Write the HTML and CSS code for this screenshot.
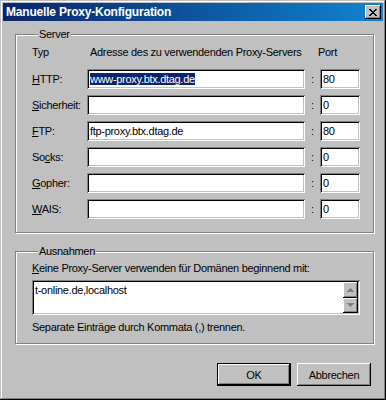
FILE: index.html
```html
<!DOCTYPE html>
<html>
<head>
    <title>Manuelle Proxy-Konfiguration</title>
    <link rel="stylesheet" href="styles.css">
</head>
<body>
    <div class="window">
        <div class="titlebar">
            <span class="title">Manuelle Proxy-Konfiguration</span>
            <div class="close-btn">
                <svg width="8" height="7" viewBox="0 0 8 7">
                    <path d="M0 0h2v1h1v1h2v-1h1v-1h2v1h-1v1h-1v1h-1v1h1v1h1v1h1v1h-2v-1h-1v-1h-2v1h-1v1h-2v-1h1v-1h1v-1h1v-1h-1v-1h-1v-1h-1z" fill="#000"/>
                </svg>
            </div>
        </div>

        <div class="content">
            <fieldset class="group server">
                <legend>Server</legend>
                <div class="proxy-grid">
                    <span class="head">Typ</span>
                    <span class="head addr">Adresse des zu verwendenden Proxy-Servers</span>
                    <span></span>
                    <span class="head port-head">Port</span>

                    <span class="label"><u>H</u>TTP:</span>
                    <div class="field"><span class="selected">www-proxy.btx.dtag.de</span></div>
                    <span class="colon">:</span>
                    <div class="field">80</div>

                    <span class="label"><u>S</u>icherheit:</span>
                    <div class="field"></div>
                    <span class="colon">:</span>
                    <div class="field">0</div>

                    <span class="label"><u>F</u>TP:</span>
                    <div class="field">ftp-proxy.btx.dtag.de</div>
                    <span class="colon">:</span>
                    <div class="field">80</div>

                    <span class="label">So<u>c</u>ks:</span>
                    <div class="field"></div>
                    <span class="colon">:</span>
                    <div class="field">0</div>

                    <span class="label"><u>G</u>opher:</span>
                    <div class="field"></div>
                    <span class="colon">:</span>
                    <div class="field">0</div>

                    <span class="label"><u>W</u>AIS:</span>
                    <div class="field"></div>
                    <span class="colon">:</span>
                    <div class="field">0</div>
                </div>
            </fieldset>

            <fieldset class="group exceptions">
                <legend>Ausnahmen</legend>
                <p class="hint"><u>K</u>eine Proxy-Server verwenden für Domänen beginnend mit:</p>
                <div class="field textarea">
                    <span class="text">t-online.de,localhost</span>
                    <div class="scrollbar">
                        <div class="scroll-btn">
                            <svg width="7" height="4" viewBox="0 0 7 4"><path d="M3 0h1v1h1v1h1v1h1v1h-7v-1h1v-1h1v-1h1z" fill="#808080"/></svg>
                        </div>
                        <div class="scroll-btn">
                            <svg width="7" height="4" viewBox="0 0 7 4"><path d="M0 0h7v1h-1v1h-1v1h-1v1h-1v-1h-1v-1h-1v-1h-1z" fill="#808080"/></svg>
                        </div>
                    </div>
                </div>
                <p class="note">Separate Einträge durch Kommata (,) trennen.</p>
            </fieldset>

            <div class="buttons">
                <div class="button default">OK</div>
                <div class="button">Abbrechen</div>
            </div>
        </div>
    </div>
</body>
</html>
```

FILE: styles.css
```css
* {
    margin: 0;
    padding: 0;
    box-sizing: border-box;
}

body {
    font-family: "Liberation Sans", Arial, sans-serif;
    font-size: 11px;
    letter-spacing: -0.3px;
    color: #000;
    background: #c0c0c0;
}

.window {
    width: 386px;
    height: 400px;
    padding: 3px;
    background: #c0c0c0;
    box-shadow: inset -1px -1px #000, inset 1px 1px #c0c0c0,
                inset -2px -2px #808080, inset 2px 2px #fff;
}

/* Title bar */
.titlebar {
    height: 18px;
    display: flex;
    align-items: center;
    justify-content: space-between;
    padding: 0 2px 0 3px;
    background: linear-gradient(to right, #0a246a, #1084d0);
}

.title {
    color: #fff;
    font-weight: bold;
    font-size: 12px;
    letter-spacing: -0.2px;
}

.close-btn {
    width: 16px;
    height: 14px;
    display: flex;
    align-items: center;
    justify-content: center;
    background: #c0c0c0;
    box-shadow: inset -1px -1px #000, inset 1px 1px #fff,
                inset -2px -2px #808080;
}

.content {
    padding: 7px 9px 0 12px;
}

/* Group boxes */
.group {
    border: 1px solid #808080;
    box-shadow: inset 1px 1px #fff, 1px 1px #fff;
}

.group legend {
    margin-left: 6px;
    padding: 0 1px;
    line-height: 13px;
    background: #c0c0c0;
}

.server {
    height: 205px;
    padding: 5px 0 0 16px;
}

.proxy-grid {
    display: grid;
    grid-template-columns: 55px 218px 15px 40px;
    grid-template-rows: 17px repeat(6, 20px);
    row-gap: 6px;
}

.head {
    line-height: 13px;
    white-space: nowrap;
}

.addr {
    padding-left: 3px;
}

.port-head {
    margin-left: -2px;
}

.label {
    line-height: 20px;
}

.colon {
    line-height: 20px;
    text-align: center;
}

.field {
    height: 20px;
    padding: 3px 0 0 3px;
    line-height: 14px;
    background: #fff;
    white-space: nowrap;
    box-shadow: inset 1px 1px #808080, inset -1px -1px #fff,
                inset 2px 2px #000, inset -2px -2px #c0c0c0;
}

.selected {
    background: #0a246a;
    color: #fff;
}

.exceptions {
    margin-top: 12px;
    height: 99px;
    padding: 3px 0 0 16px;
}

.hint {
    line-height: 14px;
}

.textarea {
    width: 328px;
    height: 35px;
    margin-top: 5px;
    display: flex;
    justify-content: space-between;
    padding: 2px 2px 2px 3px;
}

.textarea .text {
    padding-top: 1px;
}

.scrollbar {
    display: flex;
    flex-direction: column;
    width: 15px;
}

.scroll-btn {
    height: 16px;
    display: flex;
    align-items: center;
    justify-content: center;
    background: #c0c0c0;
    box-shadow: inset -1px -1px #000, inset 1px 1px #fff,
                inset -2px -2px #808080;
}

.note {
    margin-top: 6px;
    line-height: 13px;
}

/* Dialog buttons */
.buttons {
    display: flex;
    justify-content: flex-end;
    gap: 6px;
    margin-top: 19px;
    padding-right: 3px;
}

.button {
    width: 74px;
    height: 23px;
    display: flex;
    align-items: center;
    justify-content: center;
    background: #c0c0c0;
    box-shadow: inset -1px -1px #000, inset 1px 1px #fff,
                inset -2px -2px #808080;
}

.button.default {
    box-shadow: inset 0 0 0 1px #000, inset -2px -2px #000,
                inset 2px 2px #fff, inset -3px -3px #808080;
}
```
